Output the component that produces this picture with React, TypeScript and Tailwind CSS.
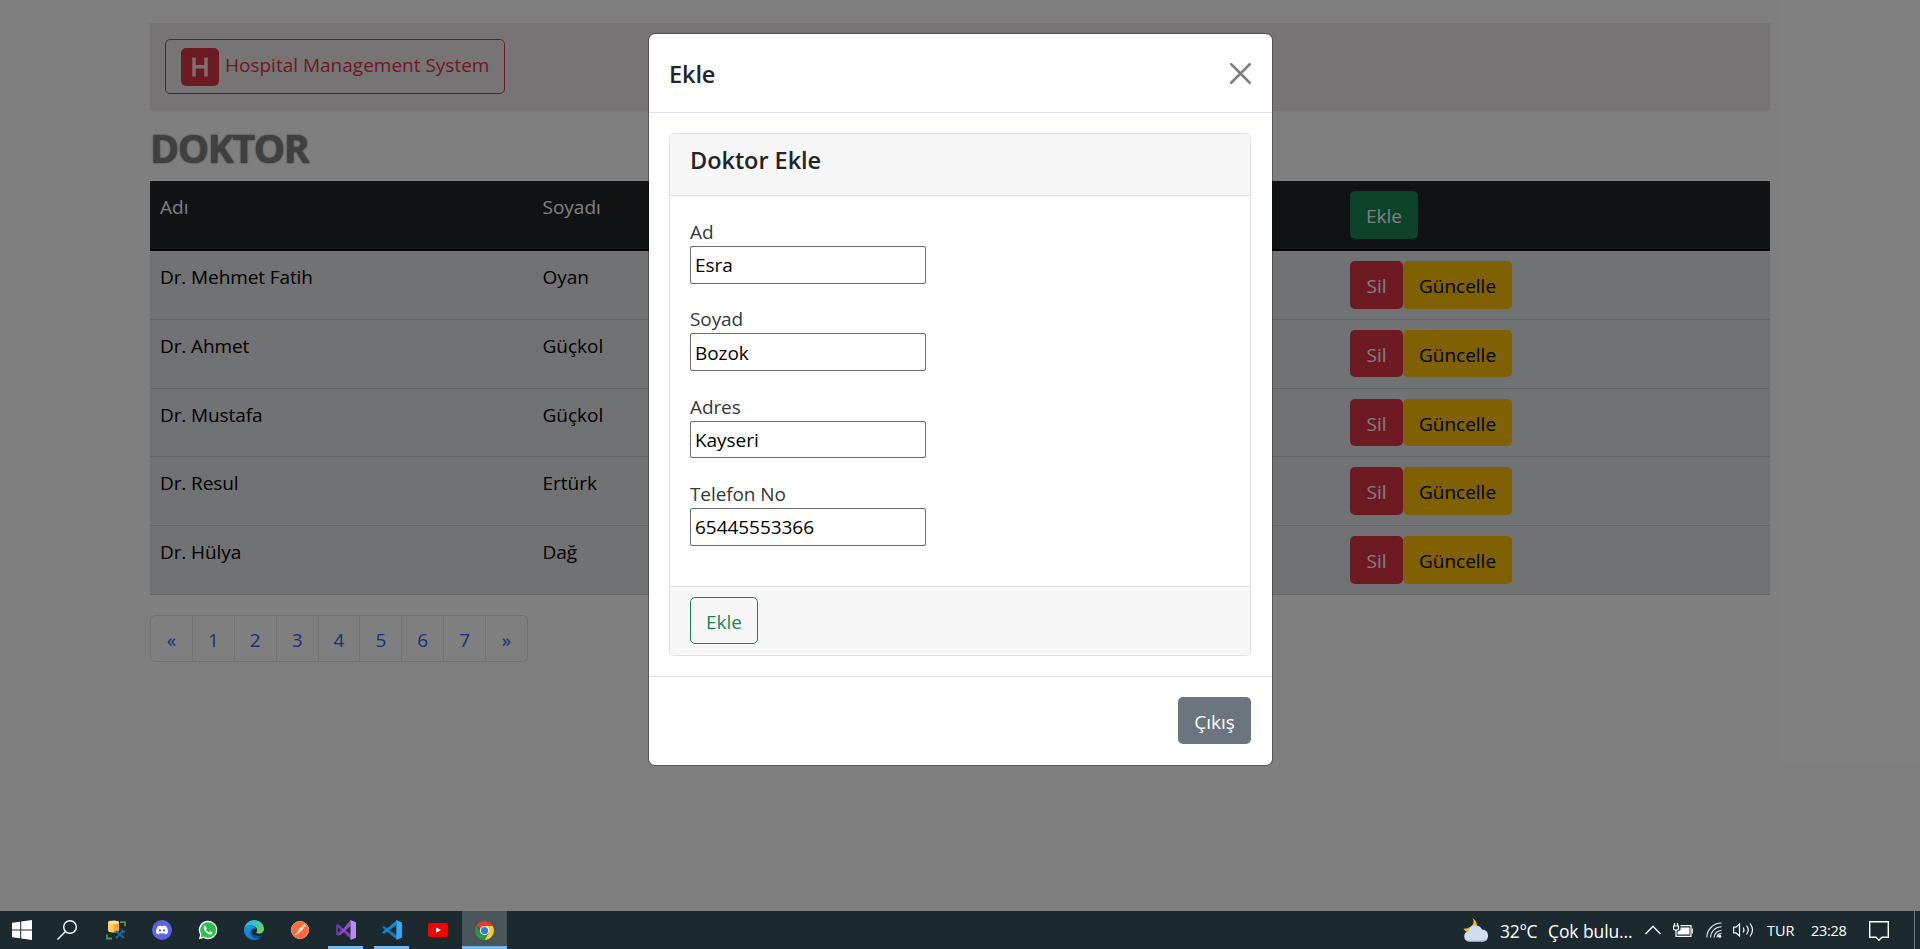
import React from "react";
import { SiDiscord, SiPostman } from "react-icons/si";

const UI = "font-['Open_Sans','Noto_Sans',sans-serif]";

const doctors = [
  ["Dr. Mehmet Fatih", "Oyan"],
  ["Dr. Ahmet", "Güçkol"],
  ["Dr. Mustafa", "Güçkol"],
  ["Dr. Resul", "Ertürk"],
  ["Dr. Hülya", "Dağ"],
];

const fields = [
  ["Ad", "Esra"],
  ["Soyad", "Bozok"],
  ["Adres", "Kayseri"],
  ["Telefon No", "65445553366"],
];

const pages = ["«", "1", "2", "3", "4", "5", "6", "7", "»"];

function Page() {
  return (
    <main className="mx-[150px] h-[911px] w-[1620px] pt-[23px]">
      <nav className="flex h-[88px] items-start bg-[#eee9ea] px-[15px] pt-4">
        <div className="flex h-[55px] w-[340px] items-start rounded-[5px] border border-[#dc3545] pt-[8px] pl-[15px] text-[#dc3545]">
          <span className="flex size-[38px] items-center justify-center rounded-[5px] bg-[#dc3545]">
            <svg viewBox="0 0 38 38" className="size-[38px]" fill="none" stroke="#f4e4e6" strokeWidth="3.400">
              <path d="M13 9.500v19M25 9.500v19M13 18.800h12" />
            </svg>
          </span>
          <span className="mt-[3px] ml-[6px] leading-[28px] whitespace-nowrap">Hospital Management System</span>
        </div>
      </nav>
      <h1 className="h-[70px] pt-[14px] text-[39.5px] leading-[46px] font-bold tracking-[-1.5px] text-[#808080] [text-shadow:0_0_2px_#606060]">DOKTOR</h1>
      <div>
        <div className="grid h-[70px] grid-cols-[383px_807px_430px] border-b-2 border-black bg-[#212529] text-white">
          <div className="px-[10px] pt-[12px] leading-[28px]">Adı</div>
          <div className="px-[9.500px] pt-[12px] leading-[28px]">Soyadı</div>
          <div className="px-[10px] pt-[10px]">
            <button className="h-12 w-[68px] rounded-[5px] bg-[#198754] pt-[3px]">Ekle</button>
          </div>
        </div>
        {doctors.map(([name, surname]) => (
          <div key={name} className="grid h-[68.75px] grid-cols-[383px_807px_430px] border-b border-[#c6c8ca] bg-[#e2e4e6] text-black">
            <div className="px-[10px] pt-[12px] leading-[28px] tracking-[-0.1px]">{name}</div>
            <div className="px-[9.500px] pt-[12px] leading-[28px]">{surname}</div>
            <div className="flex px-[10px] pt-[10px]">
              <button className="h-[47.5px] w-[53px] rounded-[5px] bg-[#dc3545] pt-[3px] text-white">Sil</button>
              <button className="h-[47.5px] w-[109px] rounded-[5px] bg-[#ffc107] pt-[3px]">Güncelle</button>
            </div>
          </div>
        ))}
      </div>
      <div className="mt-5 flex h-[47px] w-[378px] rounded-[5px] border border-[#dee2e6] text-[#2b66f5]">
        {pages.map((p) => (
          <span key={p} className="flex flex-1 items-center justify-center border-r border-[#dee2e6] pt-[3px] last:border-r-0">{p}</span>
        ))}
      </div>
    </main>
  );
}

function Modal() {
  return (
    <section className="absolute top-[34px] left-[649px] flex h-[731px] w-[623px] flex-col rounded-[6px] bg-white text-[#212529] shadow-[0_0_0_1px_rgba(0,0,0,0.3)]">
      <header className="flex h-[79px] items-center justify-between border-b border-[#dee2e6] pr-[20px] pl-5">
        <h5 className="pt-[4px] text-[23.5px] font-[550] tracking-[-0.1px]">Ekle</h5>
        <svg viewBox="0 0 20 20" className="mr-px size-[21px]" stroke="#7f7f7f" strokeWidth="2.400" strokeLinecap="round">
          <path d="M1.200 1.200L18.800 18.800M18.800 1.200L1.200 18.800" />
        </svg>
      </header>
      <div className="h-[563px] py-5 pr-[21px] pl-5">
        <div className="flex h-[523px] flex-col overflow-hidden rounded-[5px] border border-[#dfdfdf]">
          <div className="h-[62px] border-b border-[#dfdfdf] bg-[#f7f7f7] px-5 pt-[10px]">
            <h5 className="text-[23.5px] leading-[32px] font-[550] tracking-[-0.050px]">Doktor Ekle</h5>
          </div>
          <div className="flex-1 px-5 pt-[19px]">
            {fields.map(([label, value]) => (
              <div key={label} className="h-[87.4px]">
                <label className="block h-[31px] pt-[3px] leading-[28px] tracking-[-0.1px] text-[#33373b]">{label}</label>
                <input readOnly value={value} className="block h-[37.5px] w-[236px] rounded-[2px] border border-[#6c6c6c] px-[4px] pt-px tracking-[-0.050px] text-black" />
              </div>
            ))}
          </div>
          <div className="h-[69px] border-t border-[#dfdfdf] bg-[#f7f7f7] px-5 pt-[10px]">
            <button className="h-[47px] w-[68px] rounded-[5px] border border-[#198754] pt-[3px] text-[#198754]">Ekle</button>
          </div>
        </div>
      </div>
      <footer className="flex flex-1 items-start justify-end border-t border-[#dee2e6] pt-5 pr-[21px]">
        <button className="h-[47px] w-[73px] rounded-[5px] bg-[#6c757d] pt-[3px] text-white">Çıkış</button>
      </footer>
    </section>
  );
}

function Slot({ children, bar }: { children: React.ReactNode; bar?: boolean }) {
  return (
    <div className="relative flex w-[46px] items-center justify-center">
      {children}
      {bar && <span className="absolute bottom-0 h-[3px] w-[35px] bg-[#76b9ed]" />}
    </div>
  );
}

function Taskbar() {
  return (
    <footer className="flex h-[38px] justify-between bg-[#1c2a30] text-white">
      <div className="flex">
        <Slot>
          <svg viewBox="0 0 20 20" className="mr-[2px] size-5" fill="#fff">
            <path d="M0 2.800L8.200 1.700V9.500H0zM9.200 1.500L20 0V9.500H9.200zM0 10.500H8.200V18.300L0 17.200zM9.200 10.500H20V20L9.200 18.500z" />
          </svg>
        </Slot>
        <Slot>
          <svg viewBox="0 0 20 20" className="mr-[4px] size-5" fill="none" stroke="#fff" strokeWidth="1.400">
            <circle cx="13" cy="7" r="6.300" />
            <path d="M8.500 11.500L.5 19.500" />
          </svg>
        </Slot>
        <Slot>
          <svg viewBox="0 0 20 20" className="ml-px size-5" fill="none">
            <path d="M14 2.200h5v4M1 14.500v4h5" stroke="#4a9a46" strokeWidth="1.800" />
            <path d="M2 2.200v8.300c0 1.200 2.500 2 5.500 2s5.500-.8 5.500-2V2.200z" fill="#f5a93c" />
            <path d="M2 2.200h5.500v10.300c-3 0-5.500-.8-5.500-2z" fill="#fbd058" />
            <ellipse cx="7.500" cy="2.200" rx="5.500" ry="1.700" fill="#ffe29a" />
            <path d="M10 11l8 7M16.800 11.200L10 18" stroke="#1c66ad" strokeWidth="1.800" />
            <path d="M16 9.500l.5 2 2.500.3M8.800 12.500l3-.7" stroke="#2678c4" strokeWidth="1.600" />
          </svg>
        </Slot>
        <Slot>
          <span className="ml-px flex size-5 items-center justify-center rounded-full bg-[#5865e8]">
            <SiDiscord className="size-3 text-white" />
          </span>
        </Slot>
        <Slot>
          <svg viewBox="0 0 20 20" className="ml-px size-5">
            <path d="M10 .8a9.200 9.200 0 0 0-7.900 13.900L.9 19.200l4.600-1.200A9.200 9.200 0 1 0 10 .8z" fill="#fff" />
            <path d="M10 2.200a7.800 7.800 0 0 0-6.500 12.100l-.7 2.900 3-.8A7.800 7.800 0 1 0 10 2.200z" fill="#2bbf4a" />
            <path d="M7 5.500c-.9.200-1.500 1.200-1.300 2.400.5 3 3.300 5.800 6.300 6.500 1.300.2 2.400-.6 2.500-1.900l-2.200-1.200-1.100 1.200c-1.500-.6-2.700-1.700-3.300-3.200l1-1z" fill="#fff" />
          </svg>
        </Slot>
        <Slot>
          <svg viewBox="0 0 20 20" className="ml-px size-5">
            <defs>
              <linearGradient id="edgeTop" x1="0" y1="0" x2="1" y2="0.500">
                <stop offset="0" stopColor="#2da7e0" />
                <stop offset="0.500" stopColor="#35c1c4" />
                <stop offset="1" stopColor="#62d657" />
              </linearGradient>
              <linearGradient id="edgeSide" x1="0" y1="0" x2="0.700" y2="1">
                <stop offset="0" stopColor="#1b9ae2" />
                <stop offset="1" stopColor="#1672c0" />
              </linearGradient>
            </defs>
            <path d="M.1 9C.7 4 4.800 0 10.100 0 15.800 0 20 4 20 8.700c0 3-2.200 4.900-4.800 4.900-2.400 0-3.300-.9-2.500-2 1.200-2-.1-5.400-4.300-5.900C4.500 5.200 1.200 6.400.1 9z" fill="url(#edgeTop)" />
            <path d="M.1 9c1.100-2.600 4.200-3.700 7.300-3.400C10.500 6 12 7.700 11.900 8.900 8.500 7.500 6.500 10.500 7.300 13.500c.9 3.300 4.300 4.900 7.700 4.800.9 0 1.600-.3 2.200-.5C14.600 20 11.800 20 10 20 4.500 20-.5 15.500.1 9z" fill="url(#edgeSide)" />
            <path d="M7.300 9.700c-2.100 3.400.2 8.300 5.600 8.500 2.700 0 4.700-1.200 5.800-2.900-5.500 2.300-11.400-.8-11.400-5.600z" fill="#124b8f" />
          </svg>
        </Slot>
        <Slot>
          <SiPostman className="ml-px size-[18px] rounded-full bg-white text-[#fb6d3a]" />
        </Slot>
        <Slot bar>
          <svg viewBox="0 0 20 20" className="ml-px size-5">
            <path d="M0 5.200L2 4.300 14.500 14v4.800L1.800 6.800v6.500l-1.800.9z" fill="#7a3fb0" />
            <path d="M0 14.500V5l2-.7 3.500 3v5.500l-3.500 3z" fill="#6a35a0" />
            <path d="M2 7.500v5L4.700 10z" fill="#1c2a30" />
            <path d="M2 15.500L14.500 0v6L4 15.200z" fill="#8b52c5" />
            <path d="M14.500 0L20 2.300v15.400L14.500 20z" fill="#b98af0" />
          </svg>
        </Slot>
        <Slot bar>
          <svg viewBox="0 0 20 20" className="ml-px size-5">
            <path d="M0 7.500L1.800 6 14.500 15v4.500z" fill="#1478bd" />
            <path d="M0 12.500L1.800 14 14.500 5V.5z" fill="#1687cf" />
            <path d="M14.300 0L20 2.500v15L14.300 20z" fill="#31a8f0" />
          </svg>
        </Slot>
        <Slot>
          <svg viewBox="0 0 20 14" className="ml-px h-[14px] w-5">
            <rect width="20" height="14" rx="2" fill="#f80000" />
            <path d="M8 4.200L13 7 8 9.800z" fill="#fff" />
          </svg>
        </Slot>
        <div className="ml-[2px] flex w-[45px] items-center justify-center border-b-[3px] border-[#76b9ed] bg-[#4a555a] pt-[3px]">
          <svg viewBox="0 0 20 20" className="mr-px size-[19px]">
            <path d="M10 10L1.340 5A10 10 0 0 1 18.660 5z" fill="#e33b2e" />
            <path d="M10 5.200H18.700A10 10 0 0 1 10 20L14.200 12.500z" fill="#fcc934" />
            <path d="M1.340 5L5.900 12.300 10 14.800 14.200 12.500 10 20A10 10 0 0 1 1.340 5z" fill="#279847" />
            <circle cx="10" cy="10" r="4.800" fill="#fff" />
            <circle cx="10" cy="10" r="3.800" fill="#3478e8" />
          </svg>
        </div>
      </div>
      <div className="flex items-center">
        <svg viewBox="0 0 28 26" className="mb-px h-[26px] w-7">
          <path d="M10 1c4 4 .5 10.500-8.500 10.800C3 15.500 8 16.500 11.500 14.500 16.500 11.500 16 3.500 10 1z" fill="#f6b62b" />
          <path d="M7 24.500a5.200 5.200 0 0 1-.5-10.300 7.300 7.300 0 0 1 13.600-1.700A6.100 6.100 0 0 1 21.500 24.500z" fill="#cfdcf1" />
          <path d="M4 23c6 1 16 1 21.500-1-1 1.700-2.500 2.500-4 2.500H7c-1.200 0-2.200-.6-3-1.500z" fill="#a9bfe3" />
        </svg>
        <span className="ml-[10px] w-12 pt-[3px] text-[17.5px] tracking-[-0.3px] whitespace-nowrap">32°C</span>
        <span className="w-[97px] pt-[3px] text-[17.5px] tracking-[-0.1px] whitespace-nowrap">Çok bulu...</span>
        <svg viewBox="0 0 16 10" className="mr-[2px] h-[10px] w-4" fill="none" stroke="#fff" strokeWidth="1.300">
          <path d="M.5 9L8 1.200 15.500 9" />
        </svg>
        <svg viewBox="0 0 20 14" className="mb-px ml-[10px] h-[14px] w-5" fill="none" stroke="#fff" strokeWidth="1.200">
          <path d="M1.500 0v3M4.500 0v3M.5 3h5v2.500c0 1-1 1.500-2.500 1.500S.5 6.500.5 5.500zM3 7v6.300h15V2.700H7.500" />
          <path d="M7.500 4.500h9v7h-12V8.500L7.500 7z" fill="#fff" stroke="none" />
          <path d="M19.300 5.500v5" />
        </svg>
        <svg viewBox="0 0 16 16" className="ml-[13px] size-4" fill="none" stroke="#e8ecee" strokeWidth="1.100">
          <path d="M.8 15.500A14.700 14.700 0 0 1 15.500 1M4.500 15.500A11 11 0 0 1 15.500 4.800M8 15.500a7.500 7.500 0 0 1 7.500-7" />
          <path d="M11 15.500a4.500 4.500 0 0 1 4.500-4" />
          <circle cx="13.800" cy="14.200" r="1.500" fill="#fff" stroke="none" />
        </svg>
        <svg viewBox="0 0 22 16" className="ml-[11px] h-4 w-[22px]" fill="none" stroke="#fff" strokeWidth="1.200">
          <path d="M.6 5.200H3L6.500 2v12L3 10.800H.6z" />
          <path d="M10 5.500q2 2.500 0 5M13.500 3.500q3.500 4.500 0 9M17 1.500q5 6.500 0 13" />
        </svg>
        <span className="ml-3 w-[44px] pt-px text-[14.5px] whitespace-nowrap">TUR</span>
        <span className="w-[58px] pt-px text-[14.5px] tracking-[-0.3px] whitespace-nowrap">23:28</span>
        <svg viewBox="0 0 20 20" className="mt-px size-5" fill="none" stroke="#fff" strokeWidth="1.400">
          <path d="M.7.7h18.600v15.600h-6.300L10 19.200 7 16.300H.7z" />
        </svg>
        <span className="ml-[25px] h-full w-[6px] border-l border-[#6a7479]" />
      </div>
    </footer>
  );
}

export default function App() {
  return (
    <div className={`h-[949px] w-[1920px] overflow-hidden bg-white text-[19px] ${UI}`}>
      <div className="relative h-[911px] overflow-hidden">
        <Page />
        <div className="absolute inset-0 bg-black/50" />
        <Modal />
      </div>
      <Taskbar />
    </div>
  );
}
